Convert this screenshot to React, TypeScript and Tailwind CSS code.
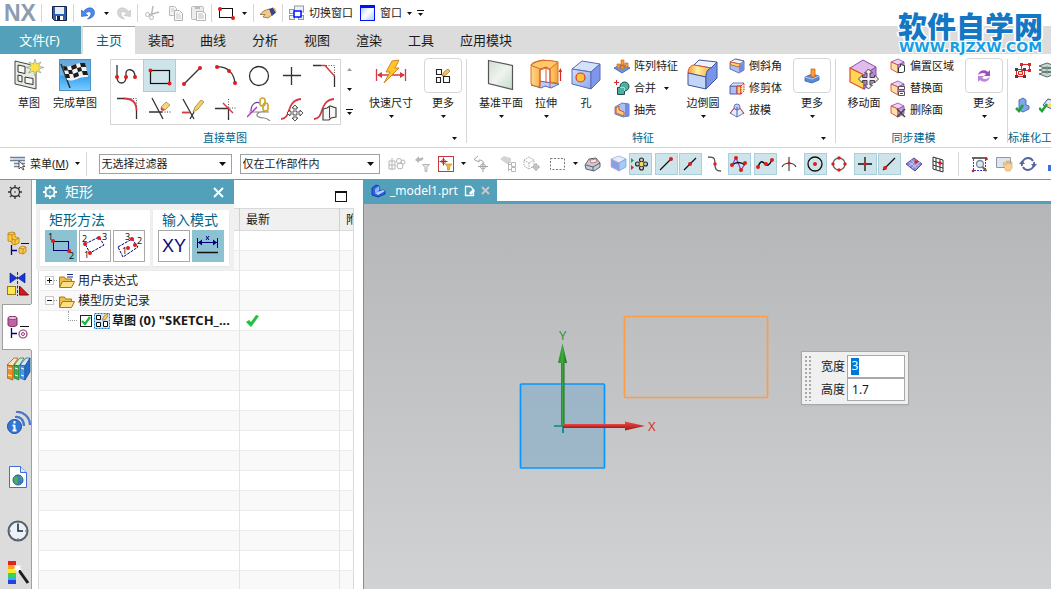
import type { ReactNode } from 'react'
import clsx from 'clsx'

type IconProps = {
  w?: number
  h?: number
  className?: string
  children?: ReactNode
}

function Icon({ w = 16, h = 16, className, children }: IconProps) {
  return (
    <svg
      width={w}
      height={h}
      viewBox={`0 0 ${w} ${h}`}
      fill="none"
      aria-hidden="true"
      className={clsx('block shrink-0', className)}
    >
      {children}
    </svg>
  )
}

function Caret({ className }: { className?: string }) {
  return (
    <Icon w={5} h={3} className={className}>
      <path d="M0 0h5L2.5 3z" fill="#111" />
    </Icon>
  )
}

function BarCaret({ className }: { className?: string }) {
  return (
    <Icon w={7} h={7} className={className}>
      <path d="M0 .5h7" stroke="#111" />
      <path d="M1 3h5L3.5 6z" fill="#111" />
    </Icon>
  )
}

function Dot({ x, y, r = 2 }: { x: number; y: number; r?: number }) {
  return <circle cx={x} cy={y} r={r} fill="#e01b1b" />
}

/* ---------- quick access icons ---------- */

const SaveIcon = () => (
  <Icon w={15} h={15}>
    <path d="M.5 .5h14v14h-12l-2-2z" fill="#2b62b8" stroke="#17213f" />
    <path d="M3 1h9v7H3z" fill="#e8edf3" />
    <path d="M4 10h7v4H4z" fill="#fff" />
    <path d="M5 10h3v4H5z" fill="#17213f" />
  </Icon>
)

const UndoIcon = ({ muted = false }: { muted?: boolean }) => (
  <Icon w={14} h={14} className={muted ? '-scale-x-100' : ''}>
    <path
      d="M0 4l.5 6.500L7 9.500 4.500 7.500C6.500 5 10 5 10 7.500c0 2-1.500 3.500-3.500 5.500 4-.5 7-3 7-6.500C13.500 1 6.500 0 2.500 5.500z"
      fill={muted ? '#d6d6d6' : '#4a8af0'}
      stroke={muted ? '#bdbdbd' : '#2358b8'}
      strokeWidth=".6"
    />
  </Icon>
)

const CutIcon = () => (
  <Icon w={15} h={14} className="text-[#b8b8b8]">
    <path d="M8 0L6.5 9M14 6L4 9" stroke="currentColor" strokeWidth="1.5" />
    <circle cx="2.5" cy="8.5" r="2" stroke="currentColor" />
    <circle cx="6.5" cy="11.5" r="2" stroke="currentColor" />
  </Icon>
)

const CopyIcon = () => (
  <Icon w={14} h={15}>
    <path d="M.5 .5h5l2 2v7h-7z" fill="#f3f3f3" stroke="#bbb" />
    <path d="M5.5 4.5h5l3 3v7h-8z" fill="#f7f7f7" stroke="#b3b3b3" />
    <path d="M7 8h4M7 10h5M7 12h5M2 3h3M2 5h3" stroke="#ccc" />
  </Icon>
)

const PasteIcon = () => (
  <Icon w={15} h={16}>
    <rect x=".5" y="1.5" width="12" height="13" rx="1" fill="#ececec" stroke="#bbb" />
    <path d="M4 1h5v3H4z" fill="#bbb" />
    <path d="M5.5 6.5h6l3 2v7h-9z" fill="#fff" stroke="#b3b3b3" />
    <path d="M7 9h5M7 11h6M7 13h6" stroke="#bbb" />
  </Icon>
)

const RectToolIcon = () => (
  <Icon w={17} h={13}>
    <rect x="1.5" y="1.5" width="13" height="9" stroke="#111" />
    <Dot x={2} y={2} />
    <Dot x={15} y={11} />
  </Icon>
)

const HandIcon = () => (
  <Icon w={17} h={13}>
    <path d="M0 7.5C2 5 5 2.5 10 2l2 6-4 3-5-1 2-2.5z" fill="#f5c98a" stroke="#8d6a3a" strokeWidth=".8" />
    <path d="M9 2l4-1.5 3 5-4 3.5z" fill="#34458e" />
    <path d="M14 1l2 4" stroke="#e8b33a" strokeWidth="1.5" />
  </Icon>
)

const SwitchWindowIcon = () => (
  <Icon w={16} h={16}>
    <rect x="5.5" y="1" width="9" height="6" fill="#eef2f6" stroke="#8a9aa8" />
    <rect x=".5" y="4.5" width="5" height="4" fill="#eef2f6" stroke="#8a9aa8" />
    <rect x=".5" y="10.5" width="5" height="4" fill="#eef2f6" stroke="#8a9aa8" />
    <rect x="9.5" y="10.5" width="5" height="4" fill="#eef2f6" stroke="#8a9aa8" />
    <rect x="5" y="6" width="7" height="6" fill="#fff" stroke="#0010ff" strokeWidth="1.5" />
  </Icon>
)

const WindowIcon = () => (
  <Icon w={15} h={16}>
    <defs>
      <linearGradient id="win" x1="0" y1="0" x2="1" y2="1">
        <stop offset="0" stopColor="#9cc4ea" />
        <stop offset=".5" stopColor="#fff" />
        <stop offset="1" stopColor="#a4cbee" />
      </linearGradient>
    </defs>
    <rect x=".5" y=".5" width="14" height="15" fill="url(#win)" stroke="#0010ff" />
    <path d="M0 1.5h15" stroke="#0010ff" strokeWidth="3" />
  </Icon>
)

/* ---------- ribbon icons ---------- */

const SketchIcon = () => (
  <Icon w={32} h={32}>
    <path d="M2 2l21 5v23L2 25z" fill="#e6ece4" stroke="#444" />
    <path d="M5 6l7 1.5v7L5 13zM5 16l4 1v6l-4-1zM12 18l8 1.5v6L12 24z" stroke="#333" fill="#f6f8f5" />
    <path
      d="M22 0l1.5 5L28 3l-2.500 4L31 8.500 25.500 10l2.500 4-4.500-2L22 17l-1.500-5-5 2 2.500-4-5-1.500 5-1.500L16 3l4.500 2z"
      fill="#ffe24a"
      stroke="#7a9a9e"
      strokeWidth=".6"
    />
  </Icon>
)

const FinishIcon = () => (
  <Icon w={32} h={32}>
    <defs>
      <linearGradient id="fin" x1="0" y1="0" x2="0" y2="1">
        <stop offset="0" stopColor="#62a8dc" />
        <stop offset=".5" stopColor="#6fb4e4" />
        <stop offset=".55" stopColor="#36a2ee" />
        <stop offset="1" stopColor="#7cccff" />
      </linearGradient>
    </defs>
    <rect x=".5" y=".5" width="31" height="31" fill="url(#fin)" stroke="#4b93c6" />
    <path d="M2 5l9 24" stroke="#333" strokeWidth="1.5" />
    <path d="M4 7c8 2 12-4 22-3l3 14c-9-1-13 5-21 3z" fill="#f3f3f3" />
    <path
      d="M4 7l4 .4 1 4-4 .2zM12 7l5-2 1 4-5 2zM21 4l5 0 1 4-5 0zM9 11l4 0 1 4-4 0zM18 9l4-1 1 4-4 1zM6 15l4 0 1 4-4 0zM14 15l5-2 1 4-5 2zM23 12l5 0 1 4-5 0z"
      fill="#1c1c1c"
    />
  </Icon>
)

const line = { stroke: '#333', strokeWidth: 1.3 }
const redLine = { stroke: '#d8393f', strokeWidth: 1.8 }

const sketchTools: { name: string; art: ReactNode }[] = [
  {
    name: '轮廓',
    art: (
      <>
        <path d="M2 1v12c0 8 9 8 9 0V9c0-5 9-5 9 4" {...line} />
        <Dot x={2} y={13} />
        <Dot x={11} y={13} />
        <Dot x={20} y={13} />
      </>
    ),
  },
  {
    name: '矩形',
    art: (
      <>
        <rect x="2.5" y="6.5" width="19" height="13" stroke="#111" strokeWidth="1.2" />
        <Dot x={2.5} y={6.5} />
        <Dot x={21.5} y={19.5} />
      </>
    ),
  },
  {
    name: '直线',
    art: (
      <>
        <path d="M3 20L19 4" {...line} />
        <Dot x={3} y={20} />
        <Dot x={19} y={4} />
      </>
    ),
  },
  {
    name: '圆弧',
    art: (
      <>
        <path d="M3 3c10-1 17 6 18 16" {...line} />
        <Dot x={3} y={3} />
        <Dot x={15} y={7} />
        <Dot x={21} y={19} />
      </>
    ),
  },
  { name: '圆', art: <circle cx="12" cy="12" r="9.5" {...line} /> },
  { name: '点', art: <path d="M11.5 3v18M3 11.5h18" {...line} /> },
  {
    name: '倒斜角',
    art: (
      <>
        <path d="M13 1.5h8.5V11" stroke="#555" strokeDasharray="1 1.500" />
        <path d="M0 1.5h8M21.5 12v11" {...line} />
        <path d="M8 1.5h4l9.500 10.500" stroke="#d8393f" strokeWidth="1.5" />
      </>
    ),
  },
  {
    name: '圆角',
    art: (
      <>
        <path d="M13 1.5h8.5V11" stroke="#555" strokeDasharray="1 1.500" />
        <path d="M2 1.5h8M21.5 13v9" {...line} />
        <path d="M9 1.5c8 0 12.5 4 12.500 12" {...redLine} />
      </>
    ),
  },
  {
    name: '快速修剪',
    art: (
      <>
        <path d="M4 1l11 21M1 15h13" {...line} />
        <path d="M14 15h9" stroke="#333" strokeDasharray="1 1.500" />
        <path d="M13 10l5-5 4 3-5 5z" fill="#f4d77a" stroke="#9c7a3c" strokeWidth=".7" />
        <path d="M13 10l4 3-2 1c-2 0-3-2-2-4z" fill="#d8494f" />
      </>
    ),
  },
  {
    name: '快速延伸',
    art: (
      <>
        <path d="M2 2l11 20M9 22l4-7" {...line} />
        <path d="M1 15.5h8" {...redLine} />
        <path d="M12 15l2-5 6-7 3 2-7 8z" fill="#f4d260" stroke="#96753a" strokeWidth=".7" />
      </>
    ),
  },
  {
    name: '制作拐角',
    art: (
      <>
        <path d="M14.5 2v9H23" stroke="#555" strokeDasharray="1 1.500" />
        <path d="M1 11.5h13.5V23" {...line} />
        <path d="M9 6l10 10" stroke="#d8393f" strokeWidth="1.5" />
      </>
    ),
  },
  {
    name: '几何约束',
    art: (
      <>
        <path d="M2 15h20c-14-2-16 6-5 6 3 0 4 1 6 3" stroke="#888" strokeWidth="1.2" />
        <path d="M4 14c0-7 5-10 9-8" stroke="#5a3fa8" strokeWidth="1.2" />
        <path d="M0 20l10-10" stroke="#c22dc8" strokeWidth="1.5" />
        <rect x="13" y="1" width="5" height="8" rx="2.500" stroke="#cda838" strokeWidth="1.7" />
        <rect x="16" y="6" width="5" height="8" rx="2.500" stroke="#cda838" strokeWidth="1.7" />
      </>
    ),
  },
  {
    name: '移动曲线',
    art: (
      <>
        <path d="M1 22c11 0 4-18 20-20" {...redLine} />
        <path
          d="M15 8l3 3h-2v4h4v-2l3 3-3 3v-2h-4v4h2l-3 3-3-3h2v-4h-4v2l-3-3 3-3v2h4v-4h-2z"
          fill="#f5f5f5"
          stroke="#444"
          strokeWidth=".9"
        />
      </>
    ),
  },
  {
    name: '偏置移动曲线',
    art: (
      <>
        <path d="M1 22c11 0 4-18 20-20" {...redLine} />
        <path d="M10 12l4-1 3-2 6 2v9l-5 1-2 2h-6z" fill="#f6f6f6" stroke="#444" strokeWidth="1.2" />
        <path d="M16.5 10v11" stroke="#444" />
      </>
    ),
  },
]

const DimensionIcon = () => (
  <Icon w={32} h={32}>
    <path d="M1.5 10v12M30.5 10v12M3 16h26" stroke="#d8393f" strokeWidth="1.3" />
    <path d="M2 16l5-3v6zM30 16l-5-3v6z" fill="#d8393f" />
    <path d="M17 2l7-1-4 8h4L9 24l6-11h-4z" fill="#ffc62b" stroke="#d07a1e" strokeWidth=".9" />
  </Icon>
)

const MoreSketchIcon = () => (
  <Icon w={16} h={16}>
    <path d="M1.5 1.5h5v5h-5zM1.5 9.5h4v5h-4zM8.5 8.5h6v6h-6z" stroke="#222" strokeWidth="1.1" />
    <path d="M7 8l2-4 4-3 2 2-4 4z" fill="#f6c659" stroke="#9d6b2b" strokeWidth=".7" />
  </Icon>
)

const DatumIcon = () => (
  <Icon w={32} h={32}>
    <defs>
      <linearGradient id="datum" x1="0" y1="0" x2="1" y2="1">
        <stop offset="0" stopColor="#cfe0d0" />
        <stop offset=".5" stopColor="#f0f3ef" />
        <stop offset="1" stopColor="#c2dcc8" />
      </linearGradient>
    </defs>
    <path d="M3.5 1.5l24 5v24l-24-6z" fill="url(#datum)" stroke="#555" strokeWidth="1.2" />
  </Icon>
)

const ExtrudeIcon = () => (
  <Icon w={32} h={32}>
    <defs>
      <linearGradient id="ext" x1="0" y1="0" x2="1" y2="0">
        <stop offset="0" stopColor="#ffd98a" />
        <stop offset=".45" stopColor="#f7a63a" />
        <stop offset=".7" stopColor="#ffd07a" />
        <stop offset="1" stopColor="#f5a135" />
      </linearGradient>
    </defs>
    <path d="M1 26l8-4 20 3-8 4-6-2-4 2z" fill="#bccdf4" stroke="#4a66c4" />
    <path d="M1 6c1-3 7-4 12-5l15 2v21l-8-1V11l-4-2-6 2v16C7 28 4 27 1 25z" fill="url(#ext)" stroke="#d8752a" />
    <path d="M1 6c2 2 6 2 9 4l6-2 4 2 8-7C20 1 8 0 1 6z" fill="#ffc869" stroke="#d8642a" />
    <path d="M10 10v18M16 8v16M20 10v19" stroke="#d8562a" />
    <path d="M30.5 22V11" stroke="#d8262b" strokeWidth="1.2" />
    <path d="M28.5 13l2-4 1.500 4z" fill="#d8262b" />
  </Icon>
)

const HoleIcon = () => (
  <Icon w={32} h={32}>
    <defs>
      <linearGradient id="hole" x1="0" y1="0" x2="1" y2="1">
        <stop offset="0" stopColor="#cfe0fb" />
        <stop offset="1" stopColor="#8fa8ee" />
      </linearGradient>
    </defs>
    <path d="M2 10l10-8 18 3-9 8z" fill="#d5e2fb" stroke="#5a6cb8" />
    <path d="M2 10l19 3v17L2 25z" fill="url(#hole)" stroke="#5a6cb8" />
    <path d="M21 13l9-8v16l-9 9z" fill="#7f96ea" stroke="#5a6cb8" />
    <circle cx="10.5" cy="18.5" r="4.500" fill="#ffc23c" stroke="#d83a20" strokeWidth="1.2" />
  </Icon>
)

const EdgeBlendIcon = () => (
  <Icon w={32} h={32}>
    <defs>
      <linearGradient id="blend" x1="0" y1="0" x2="1" y2="0">
        <stop offset="0" stopColor="#f39a3c" />
        <stop offset=".4" stopColor="#fff0a0" />
        <stop offset="1" stopColor="#f6b04a" />
      </linearGradient>
    </defs>
    <path d="M12 1l18 2-6 6L7 6z" fill="#eef2fb" stroke="#3f55a0" />
    <path d="M1 14C1 9 4 6 7 6l17 3c-3 1-5 4-5 9z" fill="url(#blend)" stroke="#e0562a" />
    <path d="M1 14l18 4v12L1 26z" fill="#c4d6f6" stroke="#3f55a0" />
    <path d="M19 18c0-5 2-8 5-9l6-6v16L19 30z" fill="#7894e8" stroke="#3f55a0" />
  </Icon>
)

const MoreFeatureIcon = () => (
  <Icon w={16} h={16}>
    <path d="M1 9l7-3 7 2v4l-7 3-7-2z" fill="#5a8bd8" stroke="#3a62a8" strokeWidth=".8" />
    <path d="M1 9l7 2 7-3" stroke="#cfe0ff" strokeWidth=".8" />
    <path d="M7 1h4v8H7z" fill="#ff9d33" stroke="#c9661c" strokeWidth=".8" />
  </Icon>
)

const MoveFaceIcon = () => (
  <Icon w={32} h={32}>
    <path d="M2 9L15 1l13 7-12 8z" fill="#e3bcee" stroke="#8a4ea8" />
    <path d="M2 9l14 7v14L2 23z" fill="#ffd750" stroke="#e04e2c" strokeWidth="1.2" />
    <path d="M16 16l12-8v14l-12 8z" fill="#be84d6" stroke="#8a4ea8" />
    <path
      d="M20.5 10l4 4H22v4.500h4.500V16l4 4-4 4v-2.500H22V26h2.500l-4 4-4-4H19v-4.500h-4.500V24l-4-4 4-4v2.500H19V14h-2.500z"
      fill="#f0f0f0"
      stroke="#444"
    />
  </Icon>
)

const MoreSyncIcon = () => (
  <Icon w={16} h={16}>
    <path d="M2 7c1-5 7-6 10-3l2-2v6H8l2-2C7 4 5 5 2 7z" fill="#a24cc4" />
    <path d="M14 9c-1 5-7 6-10 3l-2 2V8h6l-2 2c3 2 5 1 8-1z" fill="#c083d8" />
  </Icon>
)

const PatternIcon = () => (
  <Icon>
    <path d="M0 10l8-4 8 4-8 5z" fill="#6b95dd" stroke="#3a5da8" strokeWidth=".8" />
    <path d="M3 6h3v4H3zM7 2h3v5H7zM11 5h3v4h-3zM7 8h3v3H7z" fill="#ff9c2e" stroke="#c9661c" strokeWidth=".7" />
  </Icon>
)

const UniteIcon = () => (
  <Icon>
    <path d="M2.5 0v5M0 2.5h5" stroke="#d8262b" />
    <circle cx="10.5" cy="6.5" r="4.500" fill="#4fb0a2" stroke="#1e4f4a" />
    <path d="M3.5 7.5h7v7h-7z" fill="#4fb0a2" stroke="#1e4f4a" />
    <path d="M6 7.5h4.5V11" stroke="#a8dcd4" />
  </Icon>
)

const ShellIcon = () => (
  <Icon>
    <path d="M1 5l7-4 7 1v12l-6 1-8-3z" fill="#a9c0f0" stroke="#4a62ac" strokeWidth=".8" />
    <path d="M11 2l4 0v12l-4 1z" fill="#6f8ee0" />
    <path d="M2 6l3-2v4l5 2v4L2 11z" fill="#ffcf7c" stroke="#d8562a" />
  </Icon>
)

const ChamferIcon = () => (
  <Icon>
    <path d="M1 5l6-4 8 2v9l-5 3-9-4z" fill="#a9c0f0" stroke="#4a5a9c" strokeWidth=".8" />
    <path d="M10 8l5-4v8l-5 3z" fill="#6f8ee0" />
    <path d="M1 4l5-3 9 2-4 3z" fill="#eef2fb" stroke="#4a5a9c" strokeWidth=".8" />
    <path d="M1 4l10 2-1 3-8-2z" fill="#ffd36b" stroke="#e0562a" strokeWidth=".9" />
  </Icon>
)

const TrimIcon = () => (
  <Icon>
    <path d="M1 6h7v8H1z" fill="#a9c0f0" stroke="#5a5aac" />
    <path d="M1 6l3-3h11l-3 3z" fill="#dce4fa" stroke="#5a5aac" strokeWidth=".8" />
    <path d="M8 6h4v8H8z" fill="#ffd06b" stroke="#d8262b" />
    <path d="M12 6l3-3v8l-3 3z" fill="#ffe9a8" stroke="#d8262b" strokeDasharray="1.500 1" />
  </Icon>
)

const DraftIcon = () => (
  <Icon>
    <path d="M1 11l7-8 7 8-7 4z" fill="#e4ebfb" stroke="#4a62ac" strokeWidth=".8" />
    <circle cx="8" cy="5" r="3" fill="#b9cdf6" stroke="#4a62ac" strokeWidth=".8" />
    <path d="M8 5v10" stroke="#4a62ac" />
    <path d="M1 12l4-6M15 12l-4-6" stroke="#e0463a" />
  </Icon>
)

const FaceCube = ({ children }: { children: ReactNode }) => (
  <Icon>
    <path d="M1 4l7-3 6 3-6 3z" fill="#ecd2f4" stroke="#8a4ea8" strokeWidth=".8" />
    <path d="M1 4l7 3v8l-7-4z" fill="#ffe2a4" stroke="#e0463a" strokeWidth=".9" />
    <path d="M8 7l6-3v8l-6 3z" fill="#c89adb" stroke="#8a4ea8" strokeWidth=".8" />
    {children}
  </Icon>
)

const OffsetIcon = () => (
  <FaceCube>
    <path d="M8.5 9.5l2-1v-2l4 1v6l-2 1h-4z" fill="#fff" stroke="#333" />
  </FaceCube>
)

const ReplaceIcon = () => (
  <FaceCube>
    <path d="M8.5 6.5h6v3h-6zM8.5 11.5h6v4h-6z" fill="#fff" stroke="#555" />
    <path d="M10 13.5h3" stroke="#555" />
  </FaceCube>
)

const DeleteIcon = () => (
  <FaceCube>
    <path d="M7 7l8 8M15 7l-8 8" stroke="#444" strokeWidth="1.5" />
  </FaceCube>
)

/* ---------- ribbon building blocks ---------- */

function BigButton({
  icon,
  label,
  width,
  caret = false,
}: {
  icon: ReactNode
  label: string
  width: string
  caret?: boolean
}) {
  return (
    <button className={clsx('flex shrink-0 flex-col items-center pt-[5px]', width)}>
      {icon}
      <span className="mt-1 leading-4 whitespace-nowrap">{label}</span>
      {caret && <Caret className="mt-1" />}
    </button>
  )
}

function MoreButton({ icon }: { icon: ReactNode }) {
  return (
    <button className="flex w-[38px] shrink-0 flex-col items-center pt-1">
      <span className="flex h-[35px] w-full items-center justify-center rounded border border-[#d6d6d6]">
        {icon}
      </span>
      <span className="mt-0.5 leading-4">更多</span>
      <Caret className="mt-1" />
    </button>
  )
}

function SmallButton({ icon, label, caret = false }: { icon: ReactNode; label: string; caret?: boolean }) {
  return (
    <button className="flex h-[22px] items-center gap-1 whitespace-nowrap">
      {icon}
      <span>{label}</span>
      {caret && <Caret className="ml-1" />}
    </button>
  )
}

function Group({
  label,
  launcher = true,
  className,
  children,
}: {
  label: string
  launcher?: boolean
  className?: string
  children: ReactNode
}) {
  return (
    <>
      <section aria-label={label} className="flex shrink-0 flex-col">
        <div className={clsx('flex h-[75px]', className)}>{children}</div>
        <div className="flex h-[18px] items-center text-[#00648a]">
          <span className="flex-1 text-center whitespace-nowrap">{label}</span>
          {launcher && (
            <button aria-label={`${label}选项`} className="w-4 pl-0.5">
              <Caret />
            </button>
          )}
        </div>
      </section>
      <div className="mt-[5px] mb-1 w-px shrink-0 bg-[#d6d6d6]" />
    </>
  )
}

/* ---------- selection bar ---------- */

const snapTools: { name: string; on?: boolean; cls: string; art: ReactNode }[] = [
  {
    name: '启用捕捉点',
    on: true,
    cls: 'ml-0.5',
    art: (
      <>
        <path d="M0 3v5l3-2.500z" fill="#1fa33a" />
        <path d="M0 10v5l3-2.500z" fill="#d8262b" />
        <g fill="#ccc" stroke="#222" strokeWidth="1.100">
          <circle cx="10.5" cy="5" r="2" />
          <circle cx="10.5" cy="13" r="2" />
          <circle cx="6.5" cy="9" r="2" />
          <circle cx="14.5" cy="9" r="2" />
        </g>
        <circle cx="10.5" cy="9" r="2" fill="#ffe03a" />
      </>
    ),
  },
  {
    name: '端点',
    on: true,
    cls: 'ml-[3px]',
    art: (
      <>
        <path d="M3 15L14 4" stroke="#111" strokeWidth="1.3" />
        <Dot x={14} y={4} />
      </>
    ),
  },
  {
    name: '中点',
    on: true,
    cls: 'ml-px',
    art: (
      <>
        <path d="M3 15L15 3" stroke="#111" strokeWidth="1.3" />
        <Dot x={9} y={9} />
      </>
    ),
  },
  {
    name: '控制点',
    cls: 'ml-0.5',
    art: (
      <>
        <path d="M2 2c7 0 7 2 7 7s1 7 6 7" stroke="#555" strokeWidth="1.3" />
        <Dot x={9} y={9} r={1.7} />
      </>
    ),
  },
  {
    name: '极点',
    on: true,
    cls: 'ml-px',
    art: (
      <>
        <path d="M2 10L6 3l5 12 4-6" stroke="#8c35c8" strokeWidth="1.2" />
        <path d="M2 10c4-3 9-3 13 0" stroke="#111" strokeWidth="1.5" />
        <Dot x={2} y={10} />
        <Dot x={6} y={3} />
        <Dot x={11} y={15} />
        <Dot x={15} y={8} />
      </>
    ),
  },
  {
    name: '样条点',
    on: true,
    cls: 'ml-[3px]',
    art: (
      <>
        <path d="M2 12c3-8 5-5 7-3s4 2 7-4" stroke="#111" strokeWidth="1.5" />
        <Dot x={2} y={12} />
        <Dot x={10} y={9} />
        <Dot x={16} y={5} />
      </>
    ),
  },
  {
    name: '交点',
    cls: 'ml-px',
    art: (
      <>
        <path d="M9 2v14M2 12c2-5 12-5 14 0" stroke="#444" strokeWidth="1.2" />
        <Dot x={9} y={8} r={1.6} />
      </>
    ),
  },
  {
    name: '圆弧中心',
    on: true,
    cls: 'ml-[3px]',
    art: (
      <>
        <circle cx="9" cy="9" r="7" stroke="#111" strokeWidth="1.3" />
        <Dot x={9} y={9} />
      </>
    ),
  },
  {
    name: '象限点',
    cls: 'ml-px',
    art: (
      <>
        <circle cx="9" cy="9" r="6" stroke="#666" strokeWidth="1.3" />
        <Dot x={9} y={3} r={1.7} />
        <Dot x={9} y={15} r={1.7} />
        <Dot x={3} y={9} r={1.7} />
        <Dot x={15} y={9} r={1.7} />
      </>
    ),
  },
  {
    name: '现有点',
    on: true,
    cls: 'ml-[3px]',
    art: (
      <>
        <path d="M9 2v14M2 9h14" stroke="#111" strokeWidth="1.3" />
        <Dot x={9} y={9} r={1.7} />
      </>
    ),
  },
  {
    name: '曲线上的点',
    on: true,
    cls: 'ml-px',
    art: (
      <>
        <path d="M3 15L15 3" stroke="#111" strokeWidth="1.3" />
        <Dot x={5} y={13} />
      </>
    ),
  },
  {
    name: '面上的点',
    cls: 'ml-0.5',
    art: (
      <>
        <path d="M1 9l8-6 8 6-7 7z" fill="#8c8fd8" stroke="#4a4c94" />
        <path d="M4 7l8 6M6 5l8 6M4 11l8-6M7 13l8-6" stroke="#d5d6f4" strokeWidth=".8" />
        <Dot x={11} y={7} r={1.7} />
      </>
    ),
  },
  {
    name: '有界栅格点',
    cls: 'ml-px',
    art: (
      <>
        <path d="M4 2l10 3v12L4 14zM7 3v12M11 4v12M4 6l10 3M4 10l10 3" stroke="#333" />
        <Dot x={11} y={8} r={1.7} />
      </>
    ),
  },
]

function ToolButton({ name, className, children }: { name: string; className?: string; children: ReactNode }) {
  return (
    <button aria-label={name} className={clsx('flex h-[22px] shrink-0 items-center justify-center', className)}>
      {children}
    </button>
  )
}

function FilterSelect({ label, option, className }: { label: string; option: string; className: string }) {
  return (
    <div className={clsx('relative h-5 shrink-0', className)}>
      <select
        aria-label={label}
        className="h-full w-full appearance-none border border-[#a0a0a0] bg-white pl-0.5 leading-4 outline-none"
      >
        <option>{option}</option>
      </select>
      <svg width="7" height="4" className="pointer-events-none absolute top-2 right-1.5" aria-hidden="true">
        <path d="M0 0h7L3.5 4z" fill="#111" />
      </svg>
    </div>
  )
}

function QuickBar() {
  const sep = 'h-[18px] w-px shrink-0 bg-[#d6d6d6]'
  return (
    <header className="flex h-[26px] shrink-0 items-center pl-1">
      <span className="w-8 font-['Liberation_Sans'] text-[23px] leading-[26px] font-bold text-[#8b9db0]">NX</span>
      <div className={clsx(sep, 'ml-[5px]')} />
      <button aria-label="保存" className="ml-2.5">
        <SaveIcon />
      </button>
      <div className={clsx(sep, 'ml-1.5')} />
      <button aria-label="撤销" className="ml-[7px]">
        <UndoIcon />
      </button>
      <Caret className="ml-[9px]" />
      <button aria-label="重做" className="ml-2">
        <UndoIcon muted />
      </button>
      <div className={clsx(sep, 'ml-1.5')} />
      <button aria-label="剪切" className="ml-[7px]">
        <CutIcon />
      </button>
      <button aria-label="复制" className="ml-[9px]">
        <CopyIcon />
      </button>
      <button aria-label="粘贴" className="ml-2">
        <PasteIcon />
      </button>
      <div className={clsx(sep, 'ml-[5px]')} />
      <button aria-label="矩形" className="ml-1.5">
        <RectToolIcon />
      </button>
      <Caret className="ml-[7px]" />
      <div className={clsx(sep, 'ml-1.5')} />
      <button aria-label="触控" className="ml-1.5">
        <HandIcon />
      </button>
      <div className={clsx(sep, 'ml-[5px]')} />
      <button className="ml-1.5 flex items-center gap-1">
        <SwitchWindowIcon />
        切换窗口
      </button>
      <button className="ml-[7px] flex items-center gap-[5px]">
        <WindowIcon />
        窗口
        <Caret />
      </button>
      <BarCaret className="ml-[5px]" />
    </header>
  )
}

const TABS = ['装配', '曲线', '分析', '视图', '渲染', '工具', '应用模块']

function TabBar() {
  return (
    <nav className="flex h-7 shrink-0 bg-[#dcdcdc] text-[13px] leading-7">
      <button className="w-[81px] shrink-0 bg-[#53a0ba] pr-0.5 text-white">文件(F)</button>
      <button className="ml-0.5 border-t border-[#a0a0a0] bg-white px-[13px] leading-[27px] whitespace-nowrap text-[#00648a]">
        主页
      </button>
      {TABS.map((tab) => (
        <button key={tab} className="px-[13px] whitespace-nowrap">
          {tab}
        </button>
      ))}
    </nav>
  )
}

function Ribbon() {
  return (
    <div className="flex h-[94px] shrink-0 overflow-hidden border-b border-[#d6d6d6]">
      <Group label="直接草图" className="pr-1 pl-[7px]">
        <BigButton icon={<SketchIcon />} label="草图" width="w-11" />
        <BigButton icon={<FinishIcon />} label="完成草图" width="w-12" />
        <div className="mt-[5px] ml-[11px] h-[66px] border border-[#d6d6d6]">
          <div className="-m-px grid grid-cols-7">
            {sketchTools.map((tool) => (
              <button
                key={tool.name}
                aria-label={tool.name}
                className={clsx(
                  'flex h-[33px] w-[33px] items-center justify-center',
                  tool.name === '矩形' && 'border border-[#a9d0da] bg-[#cde5ea]',
                )}
              >
                <Icon w={24} h={24}>
                  {tool.art}
                </Icon>
              </button>
            ))}
          </div>
        </div>
        <div className="mt-[5px] flex h-[66px] w-4 flex-col items-center justify-around">
          <button aria-label="上一行">
            <Icon w={5} h={3}>
              <path d="M0 3h5L2.5 0z" fill="#999" />
            </Icon>
          </button>
          <button aria-label="下一行">
            <Caret />
          </button>
          <button aria-label="展开">
            <BarCaret />
          </button>
        </div>
        <div className="w-2.5" />
        <BigButton icon={<DimensionIcon />} label="快速尺寸" width="w-12" caret />
        <div className="w-[9px]" />
        <MoreButton icon={<MoreSketchIcon />} />
      </Group>

      <Group label="特征" className="pr-1 pl-2.5">
        <BigButton icon={<DatumIcon />} label="基准平面" width="w-12" caret />
        <BigButton icon={<ExtrudeIcon />} label="拉伸" width="w-[42px]" caret />
        <BigButton icon={<HoleIcon />} label="孔" width="w-[38px]" />
        <div className="mt-px ml-[9px] w-[65px]">
          <SmallButton icon={<PatternIcon />} label="阵列特征" />
          <SmallButton icon={<UniteIcon />} label="合并" caret />
          <SmallButton icon={<ShellIcon />} label="抽壳" />
        </div>
        <BigButton icon={<EdgeBlendIcon />} label="边倒圆" width="w-12" caret />
        <div className="mt-px ml-0.5 w-[55px]">
          <SmallButton icon={<ChamferIcon />} label="倒斜角" />
          <SmallButton icon={<TrimIcon />} label="修剪体" />
          <SmallButton icon={<DraftIcon />} label="拔模" />
        </div>
        <div className="w-[9px]" />
        <MoreButton icon={<MoreFeatureIcon />} />
      </Group>

      <Group label="同步建模" className="pr-1 pl-1">
        <BigButton icon={<MoveFaceIcon />} label="移动面" width="w-12" />
        <div className="mt-px ml-0.5 w-[65px]">
          <SmallButton icon={<OffsetIcon />} label="偏置区域" />
          <SmallButton icon={<ReplaceIcon />} label="替换面" />
          <SmallButton icon={<DeleteIcon />} label="删除面" />
        </div>
        <div className="w-2.5" />
        <MoreButton icon={<MoreSyncIcon />} />
      </Group>

      <Group label="标准化工具" launcher={false} className="pl-[7px]">
        <div className="grid grid-cols-2 gap-x-2 pt-[5px]">
          <ToolButton name="约束检查" className="h-8 w-4">
            <Icon w={16} h={17}>
              <path d="M6.5 2.5h8v6h-8zM1.5 7.500h8v7h-8z" stroke="#d8262b" />
              <path d="M3.5 9.5h4v3h-4z" fill="#ffe28a" stroke="#d8262b" />
              <path d="M0 6h3v3H0zM8 6h3v3H8zM0 13h3v3H0zM8 13h3v3H8z" fill="#444" />
              <path d="M5 1h3v3H5zM13 1h3v3h-3zM13 7h3v3h-3z" fill="#d8262b" />
            </Icon>
          </ToolButton>
          <ToolButton name="图层" className="h-8 w-4">
            <Icon w={16} h={17}>
              <path d="M0 12l8-3 8 3-8 3zM0 8l8-3 8 3-8 3zM0 4l8-3 8 3-8 3z" fill="#c3d6cf" stroke="#5a6c68" />
            </Icon>
          </ToolButton>
          <ToolButton name="检查部件" className="h-7 w-4">
            <Icon w={16} h={16}>
              <path d="M4 3l4-2 3 2v5l3 1v3l-6 3-4-2z" fill="#7fa6ee" stroke="#3558a8" strokeWidth=".8" />
              <path d="M1 11l3 3 4-6" stroke="#1fa33a" strokeWidth="2.500" />
            </Icon>
          </ToolButton>
          <ToolButton name="检查图纸" className="h-7 w-4">
            <Icon w={16} h={16}>
              <path d="M4 8l5-6 7 2-3 8z" fill="#dfe8f8" stroke="#3558a8" />
              <path d="M6 8l7 2 1-4" fill="#ffe03a" />
              <path d="M0 11l3 3 5-7" stroke="#1fa33a" strokeWidth="2.500" />
            </Icon>
          </ToolButton>
        </div>
      </Group>
    </div>
  )
}

function SelectionBar() {
  return (
    <div className="flex h-8 shrink-0 items-center overflow-hidden border-b border-[#7f929c] pl-2.5">
      <button className="flex items-center gap-1 whitespace-nowrap">
        <Icon w={16} h={15}>
          <path d="M0 1.500h15M0 4.500h15M4 7.500h11M4 10.500h6" stroke="#6f7f92" strokeWidth="1.3" />
          <path d="M3 3h12" stroke="#a9c4e8" />
          <path d="M9 5v8l2-2 2 3 1-.5-1.500-3H15z" fill="#fff" stroke="#333" strokeWidth=".8" />
        </Icon>
        <span>
          菜单(<u>M</u>)
        </span>
        <Caret className="ml-0.5" />
      </button>
      <div className="mr-3 ml-1.5 h-6 w-px shrink-0 bg-[#d6d6d6]" />
      <FilterSelect label="类型过滤器" option="无选择过滤器" className="w-[133px]" />
      <FilterSelect label="选择范围" option="仅在工作部件内" className="ml-2 w-[140px]" />

      <ToolButton name="选择相连" className="ml-2 w-[18px]">
        <Icon w={18} h={18} className="text-[#b5b5b5]">
          <path d="M1 6h6v8H1zM4 3v12M1 10h6" stroke="currentColor" />
          <circle cx="11" cy="6" r="2.500" stroke="currentColor" />
          <circle cx="15" cy="7" r="2" stroke="currentColor" />
          <circle cx="12" cy="11" r="3" stroke="currentColor" />
        </Icon>
      </ToolButton>
      <ToolButton name="重置过滤器" className="ml-2 w-[18px]">
        <Icon w={18} h={18} className="text-[#b8b8b8]">
          <path d="M5 1L1 5l4 3V6c3 0 5-1 4-4-1 1-2 1-4 1z" fill="currentColor" />
          <path d="M8.5 9.5h7l-2.500 3v4h-2v-4z" fill="#e4e4e4" stroke="currentColor" />
        </Icon>
      </ToolButton>
      <ToolButton name="常规过滤器" className="ml-1.5 w-4">
        <Icon w={16} h={16}>
          <rect x=".5" y=".5" width="15" height="15" stroke="#c8373c" />
          <path d="M5.5 1.5v8M1.5 5.500h8" stroke="#8a3a3a" />
          <circle cx="5.5" cy="5.500" r="2" stroke="#c8373c" />
          <path d="M7 8h7l-2.500 3v3h-2v-3z" fill="#f2b63a" stroke="#b9832a" strokeWidth=".6" />
        </Icon>
      </ToolButton>
      <Caret className="ml-[7px]" />
      <ToolButton name="显示快捷键" className="ml-[7px] w-[18px]">
        <Icon w={18} h={18} className="text-[#a4a4a4]">
          <path d="M5 1L1 4.500l5 2.500V5c3 0 4 1 5 3" stroke="currentColor" />
          <circle cx="10" cy="11.5" r="2.500" stroke="currentColor" />
          <path d="M10 7v10M5 11.500h10" stroke="currentColor" />
        </Icon>
      </ToolButton>
      <ToolButton name="装配导航" className="ml-2 w-[18px]">
        <Icon w={18} h={18} className="text-[#b8b8b8]">
          <path d="M1 4l4-3 3 1 4 1v5l-4 1-3-2z" fill="#d4d4d4" />
          <path d="M9.5 7v9M9.500 9.500H12M9.500 14.500H12M12.500 7.500h4v4h-4zM12.500 12.500h4v4h-4z" stroke="currentColor" />
        </Icon>
      </ToolButton>
      <ToolButton name="加亮" className="ml-1.5 w-[18px]">
        <Icon w={18} h={18} className="text-[#a8a8a8]">
          <path d="M1 5l5-3 5 3v6l-5 3-5-3zM1 5l5 3 5-3M6 8v6" stroke="currentColor" strokeDasharray="1.500 1" />
          <circle cx="13" cy="12" r="2.500" fill="#fff" stroke="currentColor" />
          <path d="M13 8v8M9 12h8" stroke="currentColor" />
        </Icon>
      </ToolButton>
      <ToolButton name="矩形选择" className="ml-2 w-[18px]">
        <Icon w={18} h={14}>
          <rect x="1.5" y="1.5" width="14" height="11" stroke="#777" strokeDasharray="2 1.500" />
        </Icon>
      </ToolButton>
      <Caret className="ml-1.5" />
      <ToolButton name="着色" className="ml-1.5 w-[18px]">
        <Icon w={18} h={16}>
          <path d="M1 9l4-6 7-1 4 5v4l-6 4-8-2z" fill="#c6cbd6" stroke="#59606e" />
          <path d="M2 9l7 2 7-4M9 11v4" stroke="#59606e" />
          <path d="M6 4l6-1 1 3-6 1z" fill="#e8edf6" stroke="#d86a5a" strokeWidth=".8" />
        </Icon>
      </ToolButton>
      <ToolButton name="实体" className="ml-2 w-[17px]">
        <Icon w={17} h={17}>
          <path d="M1 4l8-3 7 3-7 4z" fill="#e4edfd" stroke="#9cb0e0" strokeWidth=".8" />
          <path d="M1 4l8 4v8l-8-4z" fill="#7fa2ea" stroke="#e0a0b0" strokeWidth=".7" />
          <path d="M9 8l7-4v8l-7 4z" fill="#a5cdf6" stroke="#7c95d6" strokeWidth=".7" />
        </Icon>
      </ToolButton>
      {snapTools.map((tool) => (
        <ToolButton
          key={tool.name}
          name={tool.name}
          className={clsx('w-[23px]', tool.cls, tool.on && 'border border-[#a9d0da] bg-[#cde5ea]')}
        >
          <Icon w={18} h={18}>
            {tool.art}
          </Icon>
        </ToolButton>
      ))}
      <div className="ml-2 h-6 w-px shrink-0 bg-[#d6d6d6]" />
      <ToolButton name="缩放窗口" className="ml-3 w-[18px]">
        <Icon w={18} h={18}>
          <path d="M1 3h15" stroke="#666" strokeWidth="2" />
          <path d="M2.5 4v11.500h12V4" stroke="#2a3fe0" strokeDasharray="2 1" />
          <circle cx="9" cy="9" r="3.500" fill="#dbe9f6" stroke="#7a8794" strokeWidth="1.3" />
          <path d="M11.5 12l4 4" stroke="#8a5a2c" strokeWidth="2" />
          <Dot x={15.5} y={4} r={1.3} />
          <Dot x={2} y={16} r={1.3} />
        </Icon>
      </ToolButton>
      <ToolButton name="平移" className="ml-1.5 w-[18px]">
        <Icon w={18} h={16}>
          <path d="M1.5 1.5h14v10h-14z" fill="#dfe5ee" stroke="#8c99ad" />
          <path d="M8 8l1-2 2 3V5h1.500l.5 3V5h1.500l.5 3 1-2h1v6l-2 3h-4z" fill="#f5cf94" stroke="#c9a266" strokeWidth=".6" />
        </Icon>
      </ToolButton>
      <ToolButton name="旋转" className="ml-1.5 w-[18px]">
        <Icon w={18} h={18}>
          <path d="M3 11c-1-5 3-8 6-8 2 0 4 1 5 3M15 7c1 5-3 8-6 8-2 0-4-1-5-3" stroke="#56659c" strokeWidth="1.800" />
          <path d="M0 9h6L3 5.500zM12 9h6l-3 3.500z" fill="#56659c" />
        </Icon>
      </ToolButton>
      <ToolButton name="视图" className="ml-2.5 w-4">
        <Icon>
          <path d="M1 9h9v6H1z" fill="#3b6fe0" />
        </Icon>
      </ToolButton>
    </div>
  )
}

/* ---------- resource bar ---------- */

function GearIcon({ color, weight, size }: { color: string; weight: number; size: number }) {
  return (
    <svg width={size} height={size} viewBox="0 0 14 14" fill="none" aria-hidden="true" className="block shrink-0">
      <circle cx="7" cy="7" r="4.500" stroke={color} strokeWidth={weight} />
      <path
        d="M7 0v2.500M7 11.500V14M0 7h2.500M11.500 7H14M2 2l2 2M10 10l2 2M12 2l-2 2M4 10l-2 2"
        stroke={color}
        strokeWidth={weight}
      />
      <circle cx="7" cy="7" r=".8" fill={color} />
    </svg>
  )
}

const resourceTabs: { name: string; cls: string; art: ReactNode }[] = [
  {
    name: '装配导航器',
    cls: 'mt-[18px] h-[42px]',
    art: (
      <>
        <path d="M1 2l4-1 3 1v4l4 1v5l-4 2-3-1v-2l-4-1z" fill="#ffc83a" stroke="#b5801c" strokeWidth=".8" />
        <path d="M1 3l4 1 3-2M5 4v7M5 8l3 1 4-2M8 9v5" stroke="#b5801c" strokeWidth=".8" />
        <path d="M12 17l3-2 4 1v5l-3 2-4-1zM12 17l4 1 3-2M16 18v5" fill="#ffc83a" stroke="#b5801c" strokeWidth=".8" />
        <path d="M14 12.5h8" stroke="#111" />
        <path d="M4.5 14v10M4.5 19.500H10" stroke="#000080" strokeWidth="1.3" />
      </>
    ),
  },
  {
    name: '约束导航器',
    cls: 'h-10',
    art: (
      <>
        <path d="M3 1v10l7-5zM18 1v10l-7-5z" fill="#1238d8" stroke="#0a1a80" strokeWidth=".6" />
        <path d="M10.5 0v24" stroke="#333" strokeDasharray="3 1.500" />
        <rect x=".5" y="14.5" width="8" height="8" fill="#ffe94a" stroke="#8d7d14" />
        <path d="M12.5 14v9h9z" fill="#d8181c" stroke="#7a0d10" />
      </>
    ),
  },
  {
    name: '部件导航器',
    cls: 'h-[46px]',
    art: (
      <>
        <path d="M1 3c0-2 9-2 9 0v7c0 2-9 2-9 0z" fill="#c062a4" stroke="#7c2a66" />
        <ellipse cx="5.5" cy="3" rx="4.500" ry="1.500" fill="#f0c8e4" stroke="#7c2a66" strokeWidth=".8" />
        <path d="M13 11.500h9" stroke="#111" />
        <path d="M4.5 13v10M4.5 18.500H10" stroke="#000080" strokeWidth="1.3" />
        <circle cx="16" cy="19" r="4" stroke="#8c3a74" strokeWidth="1.2" />
        <circle cx="16" cy="19" r="1.500" stroke="#8c3a74" />
      </>
    ),
  },
  {
    name: '重用库',
    cls: 'h-[38px]',
    art: (
      <>
        <path d="M0 8l6 1 5-8H7z" fill="#fbe3c4" stroke="#9c4d12" strokeWidth=".7" />
        <path d="M0 8l6 1v14l-6-2z" fill="#f28c28" stroke="#9c4d12" strokeWidth=".7" />
        <path d="M7 8l5 1 5-8h-4z" fill="#d6f0d4" stroke="#1f6e30" strokeWidth=".7" />
        <path d="M7 8l5 1v14l-5-2z" fill="#3cae52" stroke="#1f6e30" strokeWidth=".7" />
        <path d="M13 8l5 1 5-8h-4z" fill="#d6e6fa" stroke="#1c5294" strokeWidth=".7" />
        <path d="M13 8l5 1v14l-5-2z" fill="#4a98e8" stroke="#1c5294" strokeWidth=".7" />
        <path d="M18 9l5-8v14l-5 8z" fill="#1f6fc8" stroke="#1c5294" strokeWidth=".7" />
        <path d="M1 11l4 1M8 11l3 1M14 11l3 1M1 18l4 1M8 18l3 1M14 18l3 1" stroke="#fff" />
      </>
    ),
  },
  {
    name: 'HD3D 工具',
    cls: 'mt-4 h-[38px]',
    art: (
      <>
        <path d="M8 6c5-1 9 3 9 9M9 1c7-1 14 5 14 13" stroke="#4a78c8" strokeWidth="2.200" />
        <circle cx="7.5" cy="15.5" r="7" fill="#2f78d8" stroke="#1a4ea0" />
        <path d="M7.500 10v2.500M7.500 14v6M5.500 14.500h2M5.500 19.500h4" stroke="#fff" strokeWidth="2" />
      </>
    ),
  },
  {
    name: 'Web 浏览器',
    cls: 'mt-4 h-[38px]',
    art: (
      <>
        <path d="M2.5 1.5h11l6 6v15h-17z" fill="#fff" stroke="#3f6fd0" />
        <path d="M13.5 1.5v6h6" fill="#dfe9fa" stroke="#3f6fd0" />
        <circle cx="11" cy="15" r="5" fill="#3a7fc8" stroke="#245a94" />
        <path d="M7 12c3-2 5 0 4 2s1 4-1 5-4-4-3-7zM13 11c3 1 3 4 1 5z" fill="#4cb04a" />
      </>
    ),
  },
  {
    name: '历史记录',
    cls: 'mt-4 h-[38px]',
    art: (
      <>
        <circle cx="11" cy="12" r="9.500" fill="#eaf1f8" stroke="#5a6068" strokeWidth="2" />
        <path d="M11 5v7h5" stroke="#1a2438" strokeWidth="1.500" />
        <path d="M11 3.500V5M11 19v1.500M2.500 12H4M18 12h1.500" stroke="#555" />
      </>
    ),
  },
  {
    name: '角色',
    cls: 'mt-1 h-[38px]',
    art: (
      <>
        <path d="M1 0h8v4H1z" fill="#e8201c" />
        <path d="M1 4h8v4H1z" fill="#ffa21f" />
        <path d="M1 8h8v4H1z" fill="#f4ee2a" />
        <path d="M1 12h8v4H1z" fill="#3fd05a" />
        <path d="M1 16h8v3H1z" fill="#28b8f0" />
        <path d="M1 19h8v4H1z" fill="#2a3fe0" />
        <path d="M11 8l10 14" stroke="#1c1c1c" strokeWidth="3" />
        <path d="M10 2l1 3 3-1-1 3 2 2h-3l-1 3-2-3H6l2-2-1-3 3 1z" fill="#fff" />
      </>
    ),
  },
]

function ResourceBar() {
  return (
    <aside className="flex w-8 shrink-0 flex-col overflow-hidden bg-[#dcdcdc]">
      <button aria-label="资源条选项" className="flex h-6 shrink-0 items-center justify-center border-r border-[#a0a0a0] pr-0.5">
        <GearIcon color="#333" weight={1.3} size={14} />
      </button>
      {resourceTabs.map((tab) => {
        const active = tab.name === '部件导航器'
        return (
          <div key={tab.name} className={clsx('shrink-0 border-r', active ? 'border-white pl-0.5' : 'border-[#a0a0a0]')}>
            <button
              aria-label={tab.name}
              className={clsx(
                'flex w-full items-center justify-end',
                tab.cls,
                active && 'border border-r-0 border-[#a0a0a0] bg-white',
              )}
            >
              <Icon w={24} h={24}>
                {tab.art}
              </Icon>
            </button>
          </div>
        )
      })}
      <div className="flex-1 border-r border-[#a0a0a0]" />
    </aside>
  )
}

/* ---------- part navigator ---------- */

const FolderIcon = ({ marked = false }: { marked?: boolean }) => (
  <Icon w={18} h={16}>
    <path d="M1.5 14V4h5l1 2h6v3" fill="#f2c04a" stroke="#a07a20" />
    <path d="M1.5 14.5l3-6h12l-3 6z" fill="#ffdf86" stroke="#a07a20" />
    {marked && <path d="M9 1.5h6M9 4h6" stroke="#1a2a88" strokeWidth="1.2" />}
  </Icon>
)

function Expander({ open }: { open: boolean }) {
  return (
    <button
      aria-label={open ? '折叠' : '展开'}
      className="flex h-[9px] w-[9px] shrink-0 items-center justify-center border border-[#c8c8c8] bg-white"
    >
      <Icon w={5} h={5}>
        <path d={open ? 'M0 2.5h5' : 'M0 2.5h5M2.5 0v5'} stroke="#111" />
      </Icon>
    </button>
  )
}

const treeRows: { cell: ReactNode; latest?: ReactNode }[] = [
  { cell: null },
  { cell: null },
  {
    cell: (
      <div className="flex h-full items-center pl-1.5">
        <Expander open={false} />
        <span className="mr-px w-[3px] border-t border-dotted border-[#999]" />
        <FolderIcon marked />
        <span className="ml-0.5">用户表达式</span>
      </div>
    ),
  },
  {
    cell: (
      <div className="flex h-full items-center pl-1.5">
        <Expander open />
        <span className="mr-px w-[3px] border-t border-dotted border-[#999]" />
        <FolderIcon />
        <span className="ml-0.5">模型历史记录</span>
      </div>
    ),
  },
  {
    cell: (
      <label className="flex h-full items-center pl-[29px] font-bold whitespace-nowrap">
        <span className="mr-[3px] h-full w-[9px]">
          <span className="block h-1/2 border-b border-l border-dotted border-[#999]" />
        </span>
        <span className="relative h-3 w-3 shrink-0">
          <input type="checkbox" defaultChecked className="block h-3 w-3 appearance-none border border-[#222] bg-white" />
          <svg width="10" height="10" className="absolute top-px left-px" fill="none" aria-hidden="true">
            <path d="M1 5l3 3 5-7" stroke="#18b83a" strokeWidth="2.200" />
          </svg>
        </span>
        <Icon w={16} h={16} className="mx-0.5">
          <rect x=".5" y=".5" width="15" height="15" fill="#cfe8ff" stroke="#0a78d8" strokeDasharray="2 1" />
          <path d="M2.5 2.5h4v4h-4zM2.5 9.5h4v4h-4zM9.5 8.5h4v5h-4z" fill="#fff" stroke="#111" />
          <path d="M8 7l2-4 3-2 1 2-3 4z" fill="#ffc45a" stroke="#9d6b2b" strokeWidth=".6" />
        </Icon>
        <span>
          草图 <span className="text-[13px]">(0) "SKETCH_...</span>
        </span>
      </label>
    ),
    latest: (
      <Icon w={13} h={12} className="ml-1.5">
        <path d="M0 7l3-2 2 2 5-7 3 1-8 11z" fill="#22c03c" />
      </Icon>
    ),
  },
  ...Array.from({ length: 14 }, () => ({ cell: null })),
]

function Navigator() {
  return (
    <div className="flex w-[316px] shrink-0 flex-col overflow-hidden pt-1 text-xs">
      <div className="flex h-6 shrink-0 items-center justify-end pr-[7px]">
        <button aria-label="最大化" className="h-[11px] w-3 border border-t-2 border-[#111] bg-white" />
      </div>
      <table className="w-full table-fixed border-collapse border border-[#d9d9d9] text-left leading-[19px]">
        <colgroup>
          <col className="w-[201px]" />
          <col className="w-[100px]" />
          <col />
        </colgroup>
        <thead>
          <tr className="h-[22px] border-b border-[#d9d9d9] bg-[#f0f0f0]">
            <th aria-label="名称" className="p-0" />
            <th className="border-l border-[#d0d0d0] p-0 pl-1.5 font-normal">最新</th>
            <th className="border-l border-[#d0d0d0] p-0">
              <div className="ml-1.5 w-[7px] overflow-hidden font-normal whitespace-nowrap">附</div>
            </th>
          </tr>
        </thead>
        <tbody>
          {treeRows.map((row, i) => (
            <tr key={i} className="h-5 border-b border-[#ececec] even:bg-[#f9f9f9]">
              <td className="h-5 p-0">{row.cell}</td>
              <td className="border-l border-[#e4e4e4] p-0">{row.latest}</td>
              <td className="border-l border-[#e4e4e4] p-0" />
            </tr>
          ))}
        </tbody>
      </table>
    </div>
  )
}

/* ---------- rectangle dialog ---------- */

const num = "font-['Noto_Sans'] text-[9px]"

const methods: { name: string; art: ReactNode }[] = [
  {
    name: '按 2 点',
    art: (
      <>
        <rect x="8.5" y="11.5" width="15" height="9" stroke="#000080" />
        <Dot x={8} y={11} />
        <Dot x={24} y={21} />
        <text x="3" y="10" fill="#111" className={num}>1</text>
        <text x="24" y="29" fill="#111" className={num}>2</text>
      </>
    ),
  },
  {
    name: '按 3 点',
    art: (
      <>
        <path d="M6 14l14-7 5 8-14 8z" stroke="#000080" strokeDasharray="3 1" />
        <Dot x={6} y={14} />
        <Dot x={20} y={8} />
        <Dot x={11} y={23} />
        <text x="3" y="12" fill="#111" className={num}>2</text>
        <text x="23" y="10" fill="#111" className={num}>3</text>
        <text x="5" y="28" fill="#111" className={num}>1</text>
      </>
    ),
  },
  {
    name: '从中心',
    art: (
      <>
        <path d="M5 17l14-8 6 8-15 10z" stroke="#000080" strokeDasharray="3 1" />
        <Dot x={15} y={18} />
        <Dot x={19} y={9} />
        <Dot x={22} y={15} />
        <text x="12" y="10" fill="#111" className={num}>3</text>
        <text x="24" y="14" fill="#111" className={num}>2</text>
        <text x="9" y="24" fill="#111" className={num}>1</text>
      </>
    ),
  },
]

const modes: { name: string; art: ReactNode }[] = [
  {
    name: '坐标模式',
    art: (
      <text x="4" y="22" fill="#0a0a7a" className="font-['Liberation_Sans'] text-[18px]">
        XY
      </text>
    ),
  },
  {
    name: '参数模式',
    art: (
      <>
        <path d="M5.5 8v10M25.5 8v10M6 12.5h19" stroke="#000080" />
        <path d="M6 12.5l4-3v6zM25 12.5l-4-3v6z" fill="#000080" />
        <path d="M14 6l3 4M17 6l-3 4" stroke="#000080" />
        <path d="M5 22.5h21" stroke="#111" strokeWidth="1.500" />
      </>
    ),
  },
]

function Choice({ title, items, active }: { title: string; items: { name: string; art: ReactNode }[]; active: string }) {
  return (
    <div role="group" aria-label={title} className="bg-white px-[5px] pb-1 shadow-xs">
      <div className="h-5 pl-1 text-sm leading-5 text-[#00648a]">{title}</div>
      <div className="flex gap-0.5">
        {items.map((item) => (
          <button
            key={item.name}
            aria-label={item.name}
            aria-pressed={item.name === active}
            className={clsx(
              'flex h-8 w-8 items-center justify-center',
              item.name === active ? 'bg-[#8dc2d2]' : 'border border-[#a8a8a8] bg-white',
            )}
          >
            <Icon w={32} h={32}>
              {item.art}
            </Icon>
          </button>
        ))}
      </div>
    </div>
  )
}

function RectangleDialog() {
  return (
    <div role="dialog" aria-label="矩形" className="absolute top-0 left-9 z-10 w-[198px] bg-[#f0f0f0]">
      <div className="flex h-6 items-center bg-[#53a0ba] pr-2.5 pl-[7px] text-sm text-white">
        <GearIcon color="#fff" weight={1.8} size={14} />
        <span className="ml-2 flex-1">矩形</span>
        <button aria-label="关闭">
          <Icon w={11} h={11}>
            <path d="M1 1l9 9M10 1l-9 9" stroke="#fff" strokeWidth="2" />
          </Icon>
        </button>
      </div>
      <div className="flex gap-[3px] px-1 pt-1.5 pb-1">
        <Choice title="矩形方法" items={methods} active="按 2 点" />
        <Choice title="输入模式" items={modes} active="参数模式" />
      </div>
    </div>
  )
}

/* ---------- graphics window ---------- */

function Viewport() {
  return (
    <main className="ml-[9px] flex min-w-0 flex-1 flex-col border-l border-[#7f929c]">
      <div className="flex h-[21px] shrink-0">
        <div className="flex h-full items-center bg-[#53a0ba] pr-[7px] pl-[7px] text-xs leading-5 text-white">
          <Icon w={15} h={14}>
            <path d="M1 4l4-3 3 1v5l4-1 2 1v3l-7 3-6-2z" fill="#2a62e0" stroke="#0b2f9c" strokeWidth=".8" />
            <path d="M1 4l3 1 4-3v5l-4 2V5z" fill="#8ab4fa" />
            <path d="M4 9l3 2 7-4-2-1z" fill="#b9d2fc" />
          </Icon>
          <span className="ml-1">_model1.prt</span>
          <Icon w={11} h={12} className="ml-1.5">
            <path d="M1.5 1.5h5l3 3v6h-8z" stroke="#fff" strokeWidth="1.3" />
            <path d="M5 8l4-4 2 2-4 4z" fill="#fff" />
          </Icon>
          <button aria-label="关闭部件" className="ml-1.5">
            <Icon w={9} h={9}>
              <path d="M1 1l7 7M8 1L1 8" stroke="#c9c9c9" strokeWidth="1.800" />
            </Icon>
          </button>
        </div>
      </div>
      <div className="relative flex-1 overflow-hidden border-t-3 border-[#53a0ba] bg-linear-to-b from-[#b5b6b7] to-[#d1d2d3]">
        <svg width="687" height="385" className="absolute top-0 left-0" fill="none" aria-hidden="true">
          <defs>
            <linearGradient id="ax" x1="0" y1="0" x2="0" y2="1">
              <stop offset="0" stopColor="#f04a44" />
              <stop offset="1" stopColor="#a01818" />
            </linearGradient>
            <linearGradient id="ay" x1="0" y1="0" x2="1" y2="0">
              <stop offset="0" stopColor="#268a2a" />
              <stop offset=".5" stopColor="#3fa840" />
              <stop offset="1" stopColor="#1d6a20" />
            </linearGradient>
          </defs>
          <rect x="156.5" y="180" width="84" height="84" rx="1" fill="#8fb1c8" fillOpacity=".75" stroke="#0a96ff" strokeWidth="1.700" />
          <rect x="260.5" y="112.5" width="143" height="81" rx="1" stroke="#ff9c46" strokeWidth="1.700" />
          <path d="M190 222h10M199 215v14" stroke="#0c8684" strokeWidth="1.700" />
          <rect x="197" y="158" width="3.5" height="63" fill="url(#ay)" />
          <path d="M194 159l4.500-20 4.500 20z" fill="url(#ay)" />
          <rect x="199" y="220" width="62" height="4" fill="url(#ax)" />
          <path d="M261 217.500l20 4.500-20 4.500z" fill="url(#ax)" />
          <text x="195" y="136" fill="#2f9a35" className="font-['Noto_Sans'] text-[13px]">Y</text>
          <text x="284" y="227" fill="#d8322f" className="font-['Noto_Sans'] text-[13px]">X</text>
        </svg>
        <form className="absolute top-[147px] left-[437px] flex items-center border border-[#a8a8a8] bg-[#f0f0f0] py-[3px] pr-[3px] pl-0.5 text-xs shadow-xs">
          <svg width="8" height="46" aria-hidden="true" className="block shrink-0">
            <defs>
              <pattern id="grip" width="4" height="4" patternUnits="userSpaceOnUse">
                <rect x="1" y="1" width="2" height="2" fill="#a8a8a8" />
              </pattern>
            </defs>
            <rect width="8" height="46" fill="url(#grip)" />
          </svg>
          <div className="ml-[9px] leading-4">
            <label className="flex items-center gap-0.5">
              宽度
              <span className="relative">
                <input
                  defaultValue="3"
                  className="block h-[23px] w-[58px] border border-[#a8a8a8] bg-white pl-1 text-transparent outline-none"
                />
                <span
                  aria-hidden="true"
                  className="pointer-events-none absolute top-[3px] left-1 h-[17px] w-2 bg-[#0078d7] text-center text-white"
                >
                  3
                </span>
              </span>
            </label>
            <label className="flex items-center gap-0.5">
              高度
              <input
                defaultValue="1.7"
                className="block h-[23px] w-[58px] border border-[#a8a8a8] bg-white pl-1 outline-none"
              />
            </label>
          </div>
        </form>
      </div>
    </main>
  )
}

function SiteBadge() {
  return (
    <div className="absolute top-[11px] right-2 z-20 flex flex-col items-center whitespace-nowrap">
      <div className="text-[29px] leading-[31px] font-black text-[#1377c4] [text-shadow:1px_1px_0_#fff,-1px_-1px_0_#fff,1px_-1px_0_#fff,-1px_1px_0_#fff,2px_0_0_#fff,-2px_0_0_#fff]">
        软件自学网
      </div>
      <div className="font-['DejaVu_Sans'] text-[14px] leading-[10px] font-bold text-[#14a0e4] [text-shadow:1px_1px_0_#fff,-1px_-1px_0_#fff,1px_-1px_0_#fff,-1px_1px_0_#fff]">
        WWW.RJZXW.COM
      </div>
    </div>
  )
}

export default function App() {
  return (
    <div className="relative flex h-screen flex-col overflow-hidden bg-white font-['Noto_Sans','Noto_Sans_CJK_SC',sans-serif] text-[11px] leading-4 text-[#1a1a1a]">
      <QuickBar />
      <TabBar />
      <Ribbon />
      <SelectionBar />
      <div className="relative flex min-h-0 flex-1">
        <ResourceBar />
        <div className="w-1.5 shrink-0" />
        <Navigator />
        <RectangleDialog />
        <Viewport />
      </div>
      <SiteBadge />
    </div>
  )
}
